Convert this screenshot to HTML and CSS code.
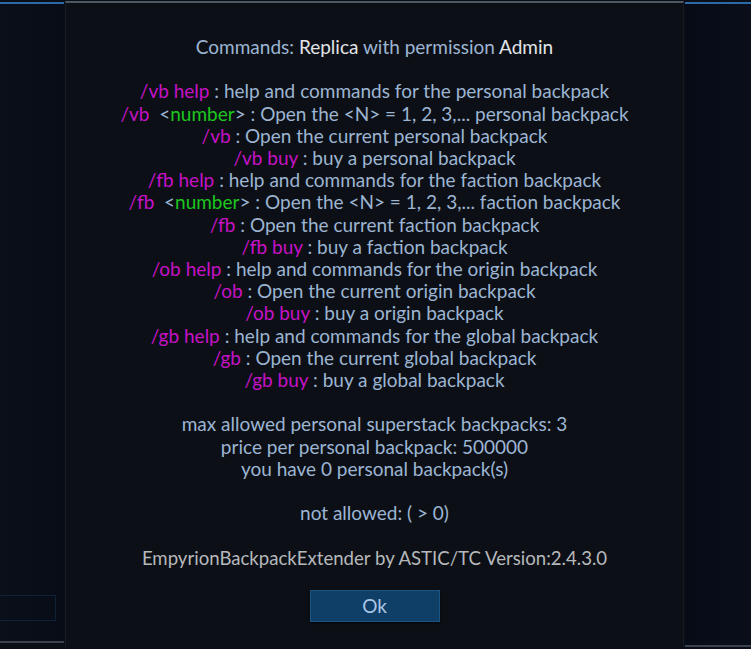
FILE: index.html
```html
<!DOCTYPE html>
<html lang="en">
<head>
  <meta charset="UTF-8">
  <title>Backpack Extender - Commands</title>
  <link rel="stylesheet" href="styles.css">
</head>
<body>

  <div class="frame">
    <div class="side side-left">
      <div class="side-box"></div>
    </div>

    <div class="dialog">
      <div class="message">
        <p>Commands: <span class="hi">Replica</span> with permission <span class="hi">Admin</span></p>
        <p>&nbsp;</p>
        <p><span class="cmd">/vb help</span> : help and commands for the personal backpack</p>
        <p><span class="cmd">/vb</span>&nbsp; &lt;<span class="arg">number</span>&gt; : Open the &lt;N&gt; = 1, 2, 3,... personal backpack</p>
        <p><span class="cmd">/vb</span> : Open the current personal backpack</p>
        <p><span class="cmd">/vb buy</span> : buy a personal backpack</p>
        <p><span class="cmd">/fb help</span> : help and commands for the faction backpack</p>
        <p><span class="cmd">/fb</span>&nbsp; &lt;<span class="arg">number</span>&gt; : Open the &lt;N&gt; = 1, 2, 3,... faction backpack</p>
        <p><span class="cmd">/fb</span> : Open the current faction backpack</p>
        <p><span class="cmd">/fb buy</span> : buy a faction backpack</p>
        <p><span class="cmd">/ob help</span> : help and commands for the origin backpack</p>
        <p><span class="cmd">/ob</span> : Open the current origin backpack</p>
        <p><span class="cmd">/ob buy</span> : buy a origin backpack</p>
        <p><span class="cmd">/gb help</span> : help and commands for the global backpack</p>
        <p><span class="cmd">/gb</span> : Open the current global backpack</p>
        <p><span class="cmd">/gb buy</span> : buy a global backpack</p>
        <p>&nbsp;</p>
        <p>max allowed personal superstack backpacks: 3</p>
        <p>price per personal backpack: 500000</p>
        <p>you have 0 personal backpack(s)</p>
        <p>&nbsp;</p>
        <p>not allowed: ( &gt; 0)</p>
        <p>&nbsp;</p>
        <p class="footer">EmpyrionBackpackExtender by ASTIC/TC Version:2.4.3.0</p>
      </div>
      <button class="ok">Ok</button>
    </div>

    <div class="side side-right"></div>
  </div>

</body>
</html>
```

FILE: styles.css
```css
body {
  margin: 0;
  padding: 0;
  background: #0a0e17;
  font-family: 'Lato', 'Noto Sans', sans-serif;
}

.frame {
  display: flex;
  height: 649px;
}

.side {
  background: linear-gradient(to right, #0a0f1a, #080c17);
  border-top: 2px solid #2a6aa8;
  border-bottom: 2px solid #3a4250;
  margin-top: 2px;
  height: 641px;
}

.side-left {
  width: 64px;
  margin-right: 1px;
  display: flex;
  flex-direction: column;
  justify-content: flex-end;
  padding-bottom: 20px;
  box-sizing: border-box;
}

.side-right {
  width: 66px;
  margin-left: 1px;
  background: linear-gradient(to right, #070b16, #0a0e1a);
}

.side-box {
  width: 56px;
  height: 26px;
  border: 1px solid #0e2236;
  border-left: none;
  box-sizing: border-box;
}

.dialog {
  width: 619px;
  height: 646px;
  margin-top: 1px;
  background: #0c1016;
  border-top: 2px solid #4e5660;
  border-left: 1px solid #161b22;
  border-right: 1px solid #161b22;
  box-sizing: border-box;
  display: flex;
  flex-direction: column;
  align-items: center;
  padding-top: 33px;
}

.message {
  text-align: center;
  color: #9cb5d3;
  font-size: 19px;
  line-height: 22.2px;
  white-space: nowrap;
}

.message p {
  margin: 0;
}

.hi {
  color: #e2e4e8;
}

.cmd {
  color: #c612c6;
}

.arg {
  color: #1ec61e;
}

.footer {
  color: #b6b8bc;
  font-size: 18.6px;
}

.ok {
  margin-top: 21px;
  width: 130px;
  height: 32px;
  background: #0f3e66;
  border: 1px solid #1a5584;
  box-shadow: 0 1px 2px rgba(0,0,0,0.8);
  color: #aac6e6;
  font-family: 'Lato', 'Noto Sans', sans-serif;
  font-size: 19px;
  cursor: pointer;
}

.ok:hover {
  background: #14497a;
}
```
